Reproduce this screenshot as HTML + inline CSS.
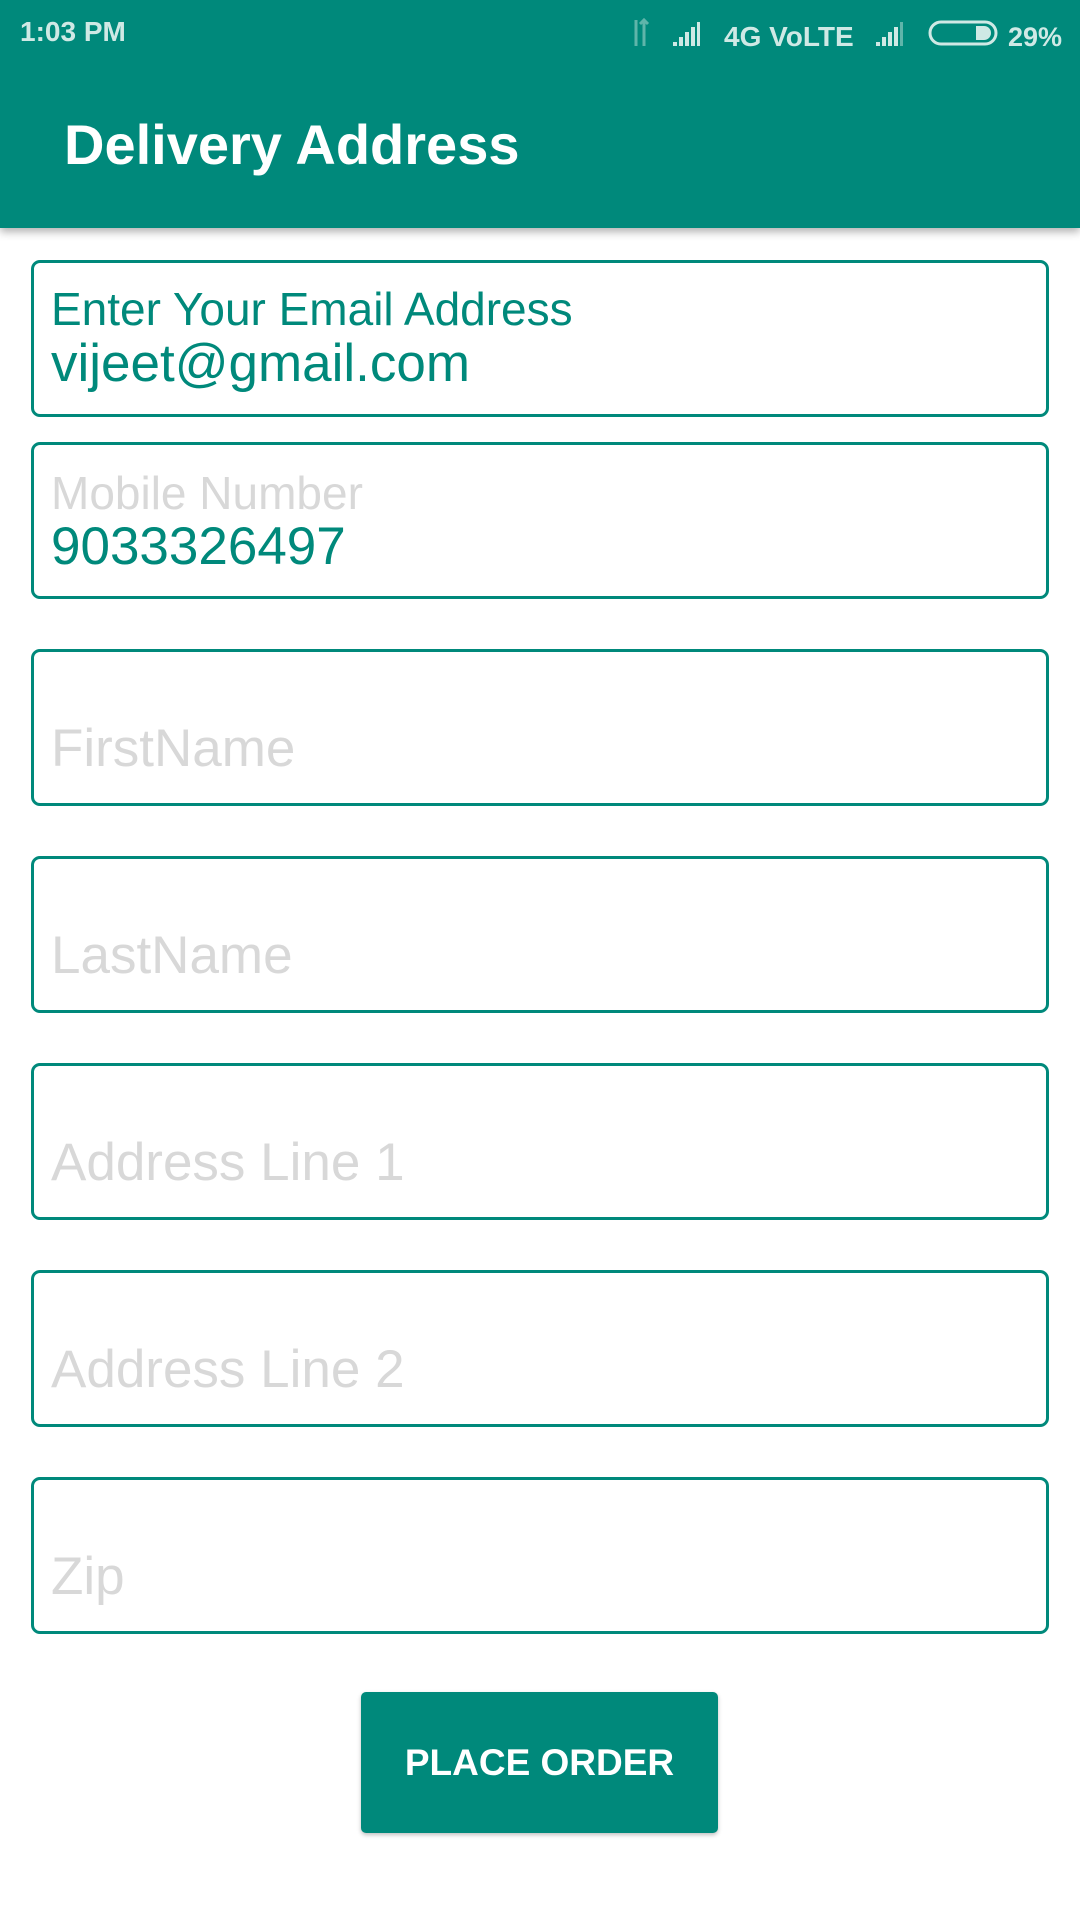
<!DOCTYPE html>
<html><head><meta charset="utf-8"><style>
*{margin:0;padding:0;box-sizing:border-box}
body{width:1080px;height:1920px;background:#fff;font-family:"Liberation Sans",Roboto,sans-serif;position:relative;overflow:hidden}
.bar{position:absolute;left:0;top:0;width:1080px;height:228px;background:#00897b;box-shadow:0 4px 8px rgba(0,0,0,.3)}
.sb{position:absolute;top:16px;font-weight:bold;font-size:28px;color:#cfe9e5}
.title{position:absolute;left:64px;top:112px;font-size:56px;font-weight:bold;color:#fff}
.f{position:absolute;left:31px;width:1018px;height:157px;border:3px solid #00897b;border-radius:9px}
.lab{position:absolute;left:17px;font-size:46px;color:#00897b;white-space:nowrap}
.val{position:absolute;left:17px;font-size:53px;color:#00897b;white-space:nowrap}
.ph{position:absolute;left:17px;top:66px;font-size:53px;color:#d8d8d8;white-space:nowrap}
.btn{position:absolute;left:361px;top:1692px;width:357px;height:141px;background:#00897b;border-radius:5px;box-shadow:0 2px 4px rgba(0,0,0,.25);color:#fff;font-weight:bold;font-size:37px;display:flex;align-items:center;justify-content:center}
</style></head><body>
<div class="bar">
<div class="sb" style="left:20px">1:03 PM</div>
<svg style="position:absolute;left:626px;top:14px" width="440" height="36" viewBox="0 0 440 36">
<path d="M10 6v26M18 32V6M14 10l4-4 4 4" stroke="#5fb5aa" stroke-width="3" fill="none"/>
<path d="M47 32h4v-4h-4zM53 32h4v-9h-4zM59 32h4v-14h-4zM65 32h4v-19h-4zM71 32h3v-24h-3z" fill="#cfe9e5"/>
<text x="98" y="32" font-family="Liberation Sans" font-weight="bold" font-size="28" fill="#cfe9e5">4G VoLTE</text>
<path d="M250 32h4v-4h-4zM256 32h4v-9h-4zM262 32h4v-14h-4zM268 32h4v-19h-4z" fill="#cfe9e5"/><path d="M274 32h3v-24h-3z" fill="#5fb5aa"/>
<rect x="304" y="8" width="66" height="22" rx="11" stroke="#cfe9e5" stroke-width="3" fill="none"/>
<path d="M350 12h8a7 7 0 0 1 0 14h-8z" fill="#cfe9e5"/>
<text x="382" y="32" font-family="Liberation Sans" font-weight="bold" font-size="27" fill="#cfe9e5">29%</text>
</svg>
<div class="title">Delivery Address</div>
</div>
<div class="f" style="top:260px"><div class="lab" style="top:19px">Enter Your Email Address</div><div class="val" style="top:70px">vijeet@gmail.com</div></div>
<div class="f" style="top:442px"><div class="lab" style="top:21px;color:#d8d8d8">Mobile Number</div><div class="val" style="top:71px">9033326497</div></div>
<div class="f" style="top:649px"><div class="ph">FirstName</div></div>
<div class="f" style="top:856px"><div class="ph">LastName</div></div>
<div class="f" style="top:1063px"><div class="ph">Address Line 1</div></div>
<div class="f" style="top:1270px"><div class="ph">Address Line 2</div></div>
<div class="f" style="top:1477px"><div class="ph">Zip</div></div>
<div class="btn">PLACE ORDER</div>
</body></html>
